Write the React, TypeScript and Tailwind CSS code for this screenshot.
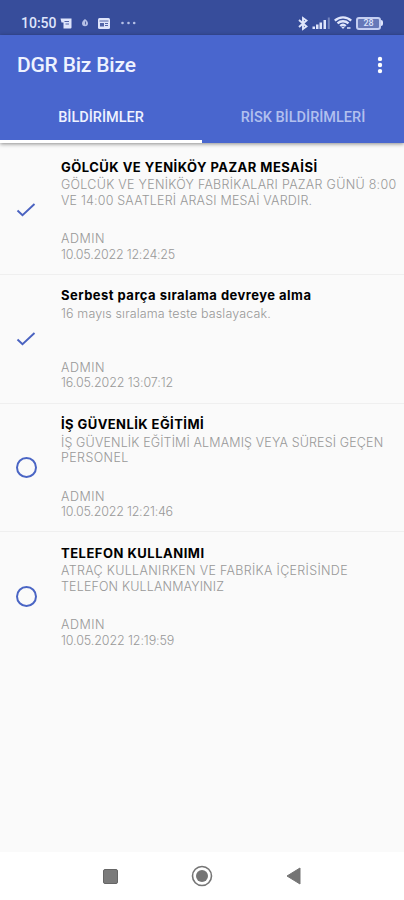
import { clsx } from "clsx";

interface Line {
  text: string;
  className?: string;
}

interface Notice {
  title: Line;
  body: Line[];
  author: string;
  date: Line;
  read: boolean;
}

const notices: Notice[] = [
  {
    title: { text: "GÖLCÜK VE YENİKÖY PAZAR MESAİSİ", className: "tracking-[0.48px]" },
    body: [
      { text: "GÖLCÜK VE YENİKÖY FABRİKALARI PAZAR GÜNÜ 8:00", className: "tracking-[0.28px]" },
      { text: "VE 14:00 SAATLERİ ARASI MESAİ VARDIR.", className: "tracking-[0.18px]" },
    ],
    author: "ADMIN",
    date: { text: "10.05.2022 12:24:25", className: "tracking-[-0.22px]" },
    read: true,
  },
  {
    title: { text: "Serbest parça sıralama devreye alma", className: "tracking-[0.47px]" },
    body: [{ text: "16 mayıs sıralama teste baslayacak.", className: "tracking-[0.13px]" }],
    author: "ADMIN",
    date: { text: "16.05.2022 13:07:12", className: "tracking-[-0.1px]" },
    read: true,
  },
  {
    title: { text: "İŞ GÜVENLİK EĞİTİMİ", className: "tracking-[0.43px]" },
    body: [
      { text: "İŞ GÜVENLİK EĞİTİMİ ALMAMIŞ VEYA SÜRESİ GEÇEN", className: "tracking-[0.14px]" },
      { text: "PERSONEL", className: "tracking-[0.4px]" },
    ],
    author: "ADMIN",
    date: { text: "10.05.2022 12:21:46", className: "tracking-[-0.2px]" },
    read: false,
  },
  {
    title: { text: "TELEFON KULLANIMI", className: "tracking-[0.5px]" },
    body: [
      { text: "ATRAÇ KULLANIRKEN VE FABRİKA İÇERİSİNDE", className: "tracking-[0.32px]" },
      { text: "TELEFON KULLANMAYINIZ", className: "tracking-[0.15px]" },
    ],
    author: "ADMIN",
    date: { text: "10.05.2022 12:19:59", className: "tracking-[-0.1px]" },
    read: false,
  },
];

function StatusBar() {
  return (
    <div className="flex h-[35px] items-start justify-between bg-[#374d9b] px-[21px] pt-[15px] text-[#dfe5fb]">
      <div className="flex h-4 items-center">
        <span className="w-[39px] text-[14px] leading-4 font-medium whitespace-nowrap">10:50</span>
        <svg width="12" height="11" viewBox="0 0 12 11">
          <path d="M0.500 0.500h11V9.500a1 1 0 0 1-1 1h-7V4.500H1.500z" fill="currentColor" />
          <path d="M4.500 3.500h4.500M5.500 6h3.500" stroke="#5264a8" strokeWidth="1" />
        </svg>
        <svg width="8" height="10" viewBox="0 0 8 10" className="ml-[9px]">
          <path d="M4 1c1.700 1.600 3 2.600 3 4.300a3 3 0 0 1-6 0C1 3.600 2.300 2.600 4 1z" fill="#b5c0e6" />
          <path d="M4.500 3.500v3" stroke="#5264a8" />
        </svg>
        <svg width="12" height="11" viewBox="0 0 12 11" className="ml-[9px]">
          <rect width="12" height="11" rx="1.500" fill="currentColor" />
          <path d="M1.500 3h9M7 5.500h3M7 7.500h3" stroke="#5264a8" />
          <rect x="2" y="5" width="4" height="3.500" fill="#5264a8" />
        </svg>
        <svg width="15" height="4" viewBox="0 0 15 4" className="ml-[11px]" fill="#b5c0e6">
          <circle cx="1.500" cy="2" r="1.300" />
          <circle cx="7.500" cy="2" r="1.300" />
          <circle cx="13.200" cy="2" r="1.300" />
        </svg>
      </div>
      <div className="flex h-4 items-center">
        <svg width="10" height="15" viewBox="0 0 10 15" fill="none" stroke="currentColor" strokeWidth="1.900">
          <path d="M1 4l7.500 6.500L5 13V2l3.500 2.500L1 11" />
        </svg>
        <svg width="19" height="12" viewBox="0 0 19 12" className="ml-1" fill="currentColor">
          <rect x="0.500" y="9.500" width="2.500" height="2.500" />
          <rect x="4" y="7.500" width="2.500" height="4.500" />
          <rect x="7.500" y="5.500" width="2.500" height="6.500" />
          <rect x="11.500" y="3" width="2.500" height="9" />
          <rect x="15.800" y="0.500" width="2" height="11.500" fill="#7484bd" />
        </svg>
        <svg width="18" height="14" viewBox="0 0 18 14" className="ml-[3px]" fill="none" stroke="currentColor" strokeWidth="2.300">
          <path d="M0.800 4.600c4.700-4.400 11.700-4.400 16.400 0M3.500 7.400c3.200-2.900 7.800-2.900 11 0M6.200 10c1.600-1.500 4-1.500 5.600 0" />
          <path d="M9 13l-2-2.200h4z" fill="currentColor" stroke="none" />
          <path d="M13 12h3.500" strokeWidth="1.500" />
        </svg>
        <div className="ml-[4px] flex items-center">
          <span className="flex h-[13px] w-[25px] items-center justify-center rounded-[3px] border-2 border-[#c5cff2] bg-[#6678b8] text-[9px] leading-none font-medium">
            28
          </span>
          <span className="h-1.5 w-0.5 rounded-r-sm bg-[#dfe5fb]" />
        </div>
      </div>
    </div>
  );
}

function Header() {
  return (
    <header className="relative z-10 h-[107.500px] bg-[#4966ce] shadow-[0_1px_4px_rgba(0,0,0,0.45)]">
      <div className="flex h-[59px] items-center justify-between pr-[20px] pl-[17px]">
        <h1 className="text-[21px] leading-6 font-medium tracking-[-0.2px] text-[#eef2ff]">DGR Biz Bize</h1>
        <svg width="8" height="18" viewBox="0 0 8 18" fill="#fff">
          <circle cx="4" cy="2.900" r="2.200" />
          <circle cx="4" cy="9" r="2.200" />
          <circle cx="4" cy="15.100" r="2.200" />
        </svg>
      </div>
      <nav className="grid h-[48.500px] grid-cols-2 text-center text-[14.500px] font-medium">
        <button className="border-b-[3px] border-white pt-[2px] text-[#eef2ff]">BİLDİRİMLER</button>
        <button className="border-b-[3px] border-transparent pt-[2px] text-[#b2c0ee]">RİSK BİLDİRİMLERİ</button>
      </nav>
    </header>
  );
}

function StatusIcon({ read }: { read: boolean }) {
  if (read) {
    return (
      <svg width="20" height="16" viewBox="0 0 20 16" fill="none" stroke="#4a62c0" strokeWidth="1.900">
        <path d="M1.500 8.500l5 4.800L18.500 2" />
      </svg>
    );
  }
  return <span className="size-[21px] rounded-full border-2 border-[#4a65c4]" />;
}

function NoticeRow({ notice }: { notice: Notice }) {
  return (
    <li className="flex h-[128.800px] border-b border-[#efefef] last:border-transparent">
      <div className="flex w-[61px] items-center pl-4">
        <StatusIcon read={notice.read} />
      </div>
      <div className="flex-1 pt-[11.500px] text-[12.500px] leading-[15.500px] font-light whitespace-nowrap text-[#989898]">
        <h2 className={clsx("mb-[1.500px] text-[13px] leading-[18px] font-bold text-black", notice.title.className)}>
          {notice.title.text}
        </h2>
        <div className="h-[54px]">
          {notice.body.map((line) => (
            <p key={line.text} className={line.className}>
              {line.text}
            </p>
          ))}
        </div>
        <p className="tracking-[0.5px]">{notice.author}</p>
        <p className={notice.date.className}>{notice.date.text}</p>
      </div>
    </li>
  );
}

function NavigationBar() {
  return (
    <footer className="flex h-12 items-center justify-center gap-[73px] bg-white text-[#757575]">
      <span className="size-[15px] rounded-[2px] border border-[#666] bg-[#7b7b7b]" />
      <svg width="22" height="22" viewBox="0 0 22 22">
        <circle cx="11" cy="11" r="9.500" fill="none" stroke="currentColor" strokeWidth="1.600" />
        <circle cx="11" cy="11" r="6" fill="currentColor" />
      </svg>
      <svg width="15" height="18" viewBox="0 0 15 18">
        <path d="M1 9L14 1v16z" fill="currentColor" stroke="currentColor" strokeLinejoin="round" />
      </svg>
    </footer>
  );
}

export default function App() {
  return (
    <div className="flex h-[900px] w-[404px] flex-col overflow-hidden bg-[#fafafa] font-['Roboto',sans-serif]">
      <StatusBar />
      <Header />
      <ul className="flex-1 pt-[3.500px] font-['Inter',sans-serif]">
        {notices.map((notice) => (
          <NoticeRow key={notice.title.text} notice={notice} />
        ))}
      </ul>
      <NavigationBar />
    </div>
  );
}
